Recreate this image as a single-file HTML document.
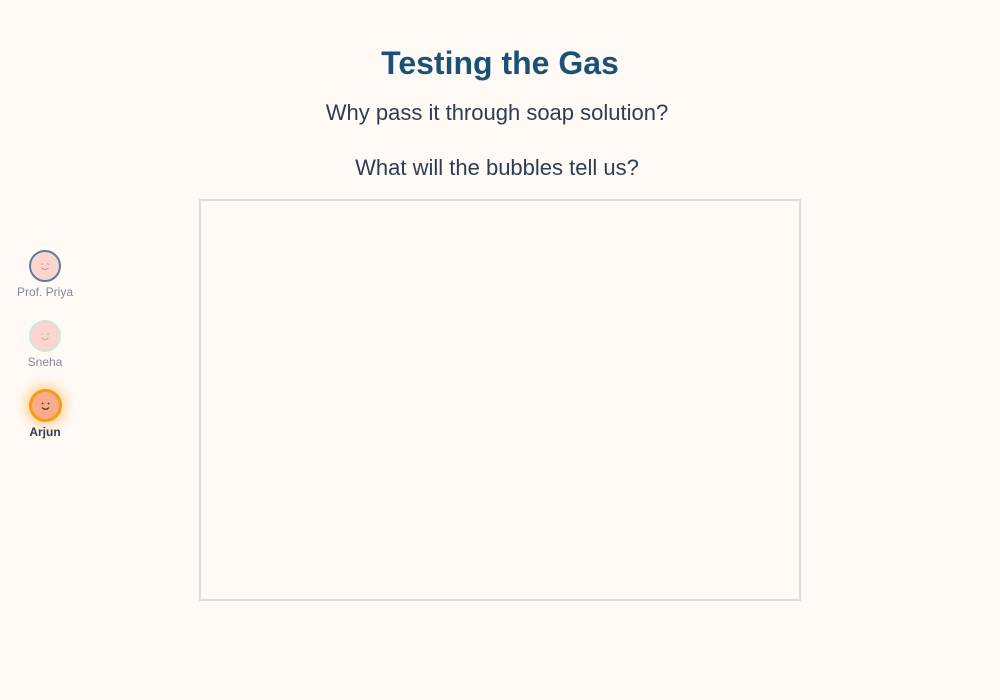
<!DOCTYPE html>
<html><head><meta charset="utf-8"><style>
body{margin:0;width:1000px;height:700px;background:#fffaf6;font-family:"Liberation Sans",sans-serif;position:relative;overflow:hidden}
h1{position:absolute;top:45px;left:0;width:1000px;text-align:center;margin:0;font-size:32px;color:#1a5276;font-weight:bold}
.q{position:absolute;left:-3px;width:1000px;text-align:center;font-size:22px;color:#2c3e50}
.box{position:absolute;left:199px;top:199px;width:598px;height:398px;border:2px solid #ddd;box-sizing:content-box}
.av{position:absolute;left:29px;width:28px;height:28px;border-radius:50%;background:#fdd5d0;border:2px solid;}
.av svg{position:absolute;left:0;top:0}
.lb{position:absolute;left:0;width:90px;text-align:center;font-size:12px;color:#7f8c9a}
</style></head><body>
<h1>Testing the Gas</h1>
<div class="q" style="top:100px">Why pass it through soap solution?</div>
<div class="q" style="top:155px">What will the bubbles tell us?</div>
<div class="box"></div>
<div class="av" style="top:250px;border-color:#5b7f9e"><svg width="28" height="28"><circle cx="11" cy="12" r="0.8" fill="#c88"/><circle cx="17" cy="12" r="0.8" fill="#c88"/><path d="M10.5 16 Q14 19 17.5 16" stroke="#c88" fill="none" stroke-width="1"/></svg></div>
<div class="lb" style="top:285px">Prof. Priya</div>
<div class="av" style="top:320px;border-color:#cde8d6"><svg width="28" height="28"><circle cx="11" cy="12" r="0.8" fill="#d99"/><circle cx="17" cy="12" r="0.8" fill="#d99"/><path d="M10.5 16 Q14 19 17.5 16" stroke="#d99" fill="none" stroke-width="1"/></svg></div>
<div class="lb" style="top:355px">Sneha</div>
<div class="av" style="top:389px;width:27px;height:27px;background:#f9ab8c;border:3px solid #f39c12;box-shadow:0 0 10px 5px rgba(243,156,18,0.35)"><svg width="27" height="27"><circle cx="10.5" cy="11.5" r="0.9" fill="#333"/><circle cx="16.5" cy="11.5" r="0.9" fill="#333"/><path d="M10 15.5 Q13.5 19 17 15.5" stroke="#333" fill="none" stroke-width="1.2"/></svg></div>
<div class="lb" style="top:425px;font-weight:bold;color:#2c3e50">Arjun</div>
</body></html>
